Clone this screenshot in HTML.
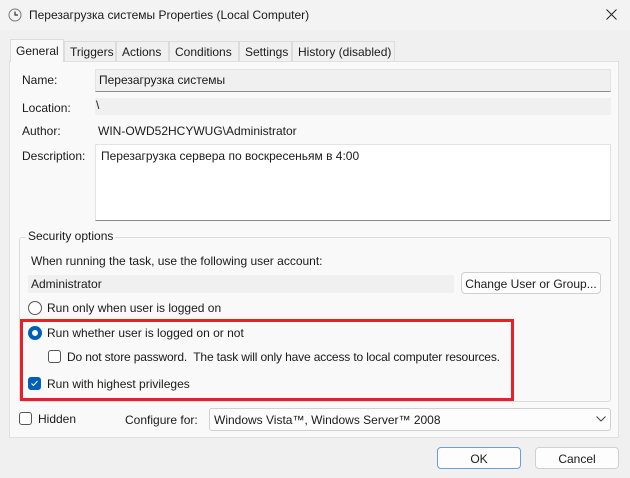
<!DOCTYPE html><html><head><style>
*{box-sizing:border-box}
body{margin:0;width:630px;height:478px;background:#f0f0f0;font-family:"Liberation Sans","Noto Sans CJK SC",sans-serif;font-size:12px;color:#1a1a1a;position:relative;overflow:hidden}
.a{position:absolute;white-space:nowrap}
.tb{left:0;top:0;width:630px;height:30px;background:#f3f3f3}
.tab{top:41px;height:20px;border:1px solid #dcdcdc;border-bottom:none;background:#f0f0f0;padding:3px 0 0 5px}
.panel{left:9px;top:61px;width:610px;height:377px;background:#f9f9f9;border:1px solid #e0e0e0}
.fld{background:#f0f0f0}
.btn{background:#fdfdfd;border:1px solid #d0d0d0;border-radius:4px;text-align:center}
.chk{width:13px;height:13px;border:1px solid #555;border-radius:3px;background:#fff}
.rad{width:14px;height:14px;border:1px solid #555;border-radius:50%;background:#fff}
</style></head><body>
<div class="a tb"></div>
<svg class="a" style="left:8px;top:8px" width="14" height="14" viewBox="0 0 14 14"><circle cx="7" cy="7" r="6" fill="#f4f4f4" stroke="#777"/><path d="M7 3.5V7H10" stroke="#333" fill="none" stroke-width="1.2"/></svg>
<div class="a" style="left:29px;top:8px">Перезагрузка системы Properties (Local Computer)</div>
<svg class="a" style="left:606px;top:9px" width="11" height="11"><path d="M0.5 0.5L10.5 10.5M10.5 0.5L0.5 10.5" stroke="#222" stroke-width="1"/></svg>
<div class="a panel"></div>
<div class="a tab" style="left:64px;width:52px">Triggers</div>
<div class="a tab" style="left:116px;width:53px">Actions</div>
<div class="a tab" style="left:169px;width:70px">Conditions</div>
<div class="a tab" style="left:239px;width:53px">Settings</div>
<div class="a tab" style="left:292px;width:103px">History (disabled)</div>
<div class="a tab" style="left:10px;top:39px;width:54px;height:23px;background:#f9f9f9;padding-top:4px">General</div>
<div class="a" style="left:22px;top:73px">Name:</div>
<div class="a fld" style="left:95px;top:69px;width:516px;height:23px;border:1px solid #e3e3e3;border-bottom:1px solid #8a8a8a;padding:3px 0 0 3px">Перезагрузка системы</div>
<div class="a" style="left:22px;top:101px">Location:</div>
<div class="a fld" style="left:95px;top:98px;width:516px;height:17px;padding:0 0 0 1px">\</div>
<div class="a" style="left:22px;top:124px">Author:</div>
<div class="a" style="left:98px;top:124px">WIN-OWD52HCYWUG\Administrator</div>
<div class="a" style="left:22px;top:149px">Description:</div>
<div class="a" style="left:95px;top:144px;width:516px;height:77px;background:#fff;border:1px solid #e3e3e3;border-bottom:1px solid #8a8a8a;padding:4px 0 0 5px">Перезагрузка сервера по воскресеньям в 4:00</div>
<div class="a" style="left:19px;top:237px;width:592px;height:165px;border:1px solid #dcdcdc;border-radius:3px"></div>
<div class="a" style="left:26px;top:229px;background:#f9f9f9;padding:0 2px">Security options</div>
<div class="a" style="left:31px;top:254px">When running the task, use the following user account:</div>
<div class="a fld" style="left:28px;top:275px;width:426px;height:18px;padding:2px 0 0 3px">Administrator</div>
<div class="a btn" style="left:461px;top:272px;width:140px;height:22px;padding-top:4px">Change User or Group...</div>
<div class="a rad" style="left:28px;top:301px"></div>
<div class="a" style="left:47px;top:301px">Run only when user is logged on</div>
<div class="a" style="left:20px;top:319px;width:494px;height:82px;border:3px solid #e8202a"></div>
<div class="a rad" style="left:28px;top:326px;border:4px solid #005fb8"></div>
<div class="a" style="left:47px;top:326px">Run whether user is logged on or not</div>
<div class="a chk" style="left:48px;top:350px"></div>
<div class="a" style="left:67px;top:350px;letter-spacing:-0.15px">Do not store password.&nbsp; The task will only have access to local computer resources.</div>
<div class="a chk" style="left:28px;top:377px;background:#005fb8;border-color:#005fb8"><svg width="11" height="11" style="display:block"><path d="M2.5 5.5L4.5 7.5L8.5 3" stroke="#fff" fill="none" stroke-width="1"/></svg></div>
<div class="a" style="left:47px;top:377px">Run with highest privileges</div>
<div class="a chk" style="left:19px;top:412px"></div>
<div class="a" style="left:38px;top:412px">Hidden</div>
<div class="a" style="left:125px;top:413px">Configure for:</div>
<div class="a btn" style="left:209px;top:408px;width:402px;height:23px;padding:4px 0 0 4px;text-align:left;border-radius:3px">Windows Vista™, Windows Server™ 2008</div>
<svg class="a" style="left:596px;top:416px" width="10" height="6"><path d="M0.5 0.5L5 5L9.5 0.5" stroke="#444" fill="none"/></svg>
<div class="a btn" style="left:437px;top:447px;width:84px;height:22px;padding-top:4px;border-color:#6aa0d6">OK</div>
<div class="a btn" style="left:535px;top:447px;width:84px;height:22px;padding-top:4px">Cancel</div>
</body></html>
